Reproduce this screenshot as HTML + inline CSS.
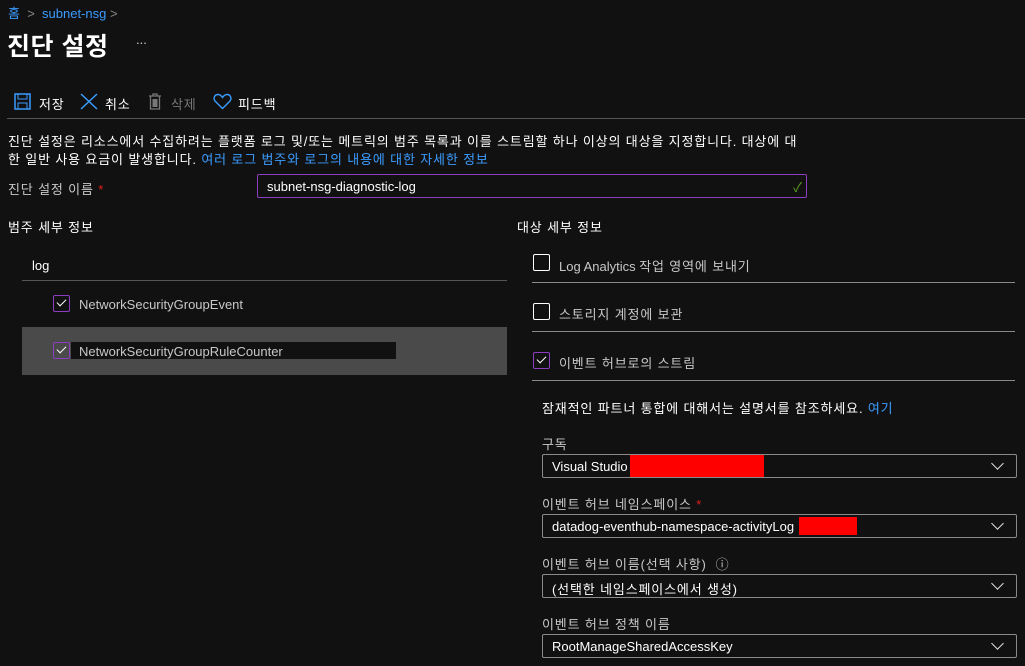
<!DOCTYPE html><html><head><meta charset="utf-8"><style>
body{margin:0;width:1025px;height:666px;background:#111;overflow:hidden;font-family:"Liberation Sans","Noto Sans CJK KR",sans-serif;font-size:13px;color:#fff;position:relative}
.a{position:absolute;white-space:nowrap}
.k{letter-spacing:.85px}
.lnk{color:#3b9cff}
.g{color:#c8c8c8}
.cb{position:absolute;width:15px;height:15px;border:1px solid #fff;border-radius:2px}
.cb.on{border-color:#8c3ec0}
.cb.on:after{content:"";position:absolute;left:5px;top:1px;width:4px;height:8px;border:solid #fff;border-width:0 1px 1px 0;transform:rotate(45deg)}
.hr{position:absolute;height:1px;background:#8a8a8a}
.dd{position:absolute;left:542px;width:473px;height:22px;border:1px solid #8a8a8a;border-radius:2px}
.dd span{position:absolute;left:9px;top:4px}
.dd:after{content:"";position:absolute;right:14px;top:4px;width:8px;height:8px;border:solid #ddd;border-width:0 1px 1px 0;transform:rotate(45deg)}
</style></head><body>
<div class="a lnk" style="left:8px;top:3px">홈 <span style="color:#888">&nbsp;&gt;&nbsp;</span> subnet-nsg <span style="color:#888">&gt;</span></div>
<div class="a" style="left:7px;top:27px;font-size:25px;font-weight:bold;letter-spacing:.5px">진단 설정</div>
<div class="a" style="left:136px;top:32px;color:#ccc">...</div>
<svg class="a" style="left:14px;top:93px" width="18" height="17" viewBox="0 0 18 17"><rect x="1" y="1" width="15" height="15" fill="none" stroke="#3b9cff" stroke-width="1.5"/><rect x="4" y="1" width="9" height="5" fill="none" stroke="#3b9cff"/><rect x="4" y="10" width="9" height="6" fill="none" stroke="#3b9cff"/></svg>
<div class="a k" style="left:39px;top:94px">저장</div>
<svg class="a" style="left:80px;top:93px" width="18" height="17"><path d="M1 1L17 16M17 1L1 16" stroke="#3b9cff" stroke-width="1.5"/></svg>
<div class="a k" style="left:105px;top:94px">취소</div>
<svg class="a" style="left:148px;top:93px" width="14" height="17"><path d="M1 3H13M5 3V1H9V3M2.5 3V16H11.5V3" fill="none" stroke="#777" stroke-width="1.3"/><rect x="4.5" y="6" width="5" height="8" fill="#777"/></svg>
<div class="a k" style="left:171px;top:94px;color:#777">삭제</div>
<svg class="a" style="left:213px;top:93px" width="19" height="17"><path d="M9.5 15.5L2 8C0 5.5 1.5 1.5 5 1.5C7 1.5 8.5 3 9.5 4.5C10.5 3 12 1.5 14 1.5C17.5 1.5 19 5.5 17 8Z" fill="none" stroke="#3b9cff" stroke-width="1.4"/></svg>
<div class="a k" style="left:238px;top:94px">피드백</div>
<div class="hr" style="left:7px;top:118px;width:1018px;background:#555"></div>
<div class="a k" style="left:8px;top:131px">진단 설정은 리소스에서 수집하려는 플랫폼 로그 및/또는 메트릭의 범주 목록과 이를 스트림할 하나 이상의 대상을 지정합니다. 대상에 대</div>
<div class="a k" style="left:8px;top:149px">한 일반 사용 요금이 발생합니다. <span class="lnk">여러 로그 범주와 로그의 내용에 대한 자세한 정보</span></div>
<div class="a g k" style="left:8px;top:179px">진단 설정 이름 <span style="color:#e02020">*</span></div>
<div class="a" style="left:257px;top:174px;width:548px;height:22px;border:1px solid #8c3ec0;border-radius:2px"><span class="a" style="left:9px;top:4px">subnet-nsg-diagnostic-log</span><span class="a" style="right:4px;top:2px;color:#5ea01e">✓</span></div>
<div class="a k" style="left:8px;top:217px">범주 세부 정보</div>
<div class="a k" style="left:517px;top:217px">대상 세부 정보</div>
<div class="a" style="left:32px;top:258px">log</div>
<div class="hr" style="left:22px;top:280px;width:485px;background:#555"></div>
<div class="cb on" style="left:53px;top:295px"></div>
<div class="a g" style="left:79px;top:297px">NetworkSecurityGroupEvent</div>
<div class="a" style="left:22px;top:327px;width:485px;height:48px;background:#4a4a4a"></div>
<div class="a" style="left:71px;top:342px;width:325px;height:17px;background:#111"></div>
<div class="cb on" style="left:53px;top:342px"></div>
<div class="a g" style="left:79px;top:344px">NetworkSecurityGroupRuleCounter</div>
<div class="cb" style="left:533px;top:254px"></div>
<div class="a g" style="left:559px;top:256px">Log Analytics <span class="k">작업 영역에 보내기</span></div>
<div class="hr" style="left:532px;top:282px;width:483px"></div>
<div class="cb" style="left:533px;top:303px"></div>
<div class="a g k" style="left:559px;top:304px">스토리지 계정에 보관</div>
<div class="hr" style="left:532px;top:331px;width:483px"></div>
<div class="cb on" style="left:533px;top:352px"></div>
<div class="a g k" style="left:559px;top:353px">이벤트 허브로의 스트림</div>
<div class="hr" style="left:532px;top:380px;width:483px"></div>
<div class="a k" style="left:542px;top:398px">잠재적인 파트너 통합에 대해서는 설명서를 참조하세요. <span class="lnk">여기</span></div>
<div class="a g k" style="left:542px;top:434px">구독</div>
<div class="dd" style="top:454px"><span>Visual Studio</span><div class="a" style="left:87px;top:0;width:134px;height:22px;background:#f00"></div></div>
<div class="a g k" style="left:542px;top:494px">이벤트 허브 네임스페이스 <span style="color:#e02020">*</span></div>
<div class="dd" style="top:514px"><span>datadog-eventhub-namespace-activityLog</span><div class="a" style="left:256px;top:2px;width:58px;height:18px;background:#f00"></div></div>
<div class="a g k" style="left:542px;top:554px">이벤트 허브 이름(선택 사항) &nbsp;ⓘ</div>
<div class="dd" style="top:574px"><span class="k">(선택한 네임스페이스에서 생성)</span></div>
<div class="a g k" style="left:542px;top:614px">이벤트 허브 정책 이름</div>
<div class="dd" style="top:634px"><span>RootManageSharedAccessKey</span></div>
</body></html>
